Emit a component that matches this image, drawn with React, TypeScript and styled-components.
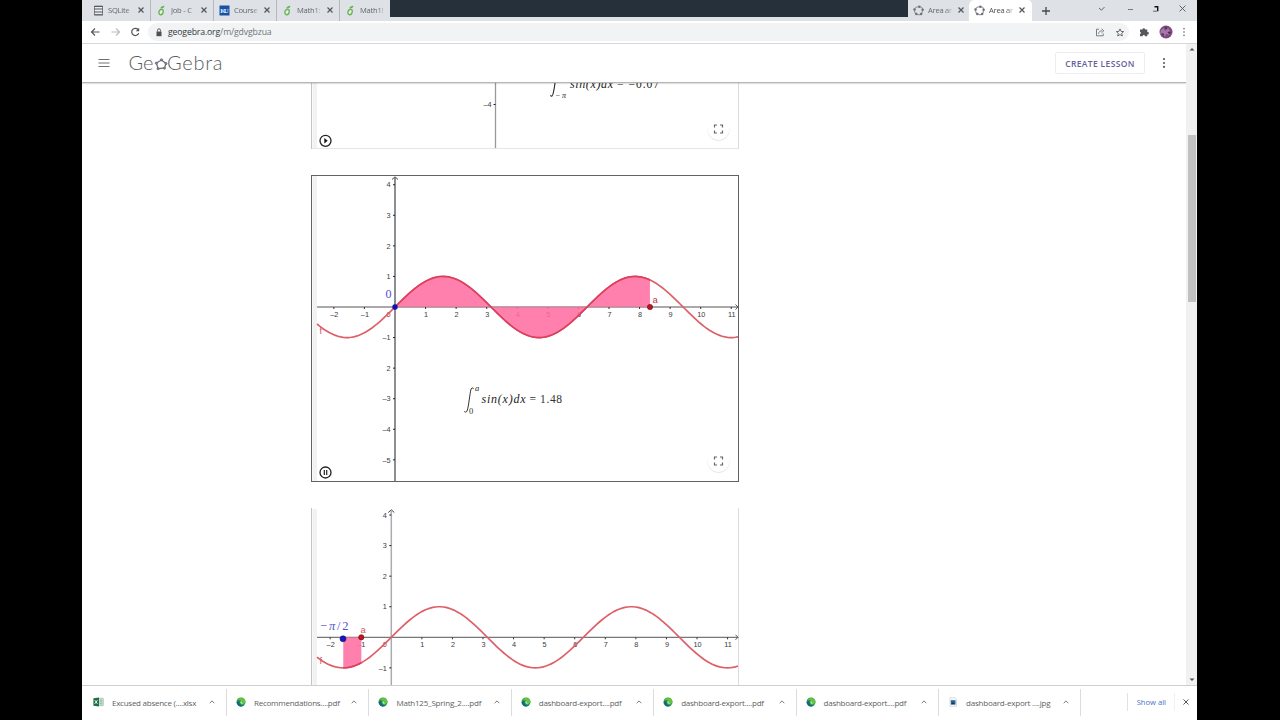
import React from "react";
import styled, { createGlobalStyle, css } from "styled-components";

const Global = createGlobalStyle`
  * { box-sizing: border-box; }
  body { margin: 0; background: #000; font-family: "Open Sans", "Noto Sans", sans-serif; }
`;

const Screen = styled.div`
  width: 1280px; height: 720px; background: #000; overflow: hidden;
  display: flex; justify-content: flex-start; padding-left: 82px;
`;
const BrowserWindow = styled.div`
  width: 1115px; height: 720px; background: #fff;
  display: flex; flex-direction: column;
`;

/* Tab strip */
const TabStrip = styled.div`
  height: 21px; flex: none; background: #dee1e6; display: flex; align-items: stretch; padding-left: 6px;
`;
const TabBox = styled.div<{ $active?: boolean; $w: number; $sep?: boolean }>`
  width: ${p => p.$w}px; flex: none; display: flex; align-items: center; padding: 0 0 1px 5px;
  font-size: 7.6px; color: ${p => (p.$active ? "#4a4d51" : "#63676c")};
  ${p => p.$active && css`background: #fff; border-radius: 5px 5px 0 0;`}
  border-right: 1px solid ${p => (p.$sep ? "#b4b7bc" : "transparent")};
  background-clip: padding-box;
`;
const TabTitle = styled.span`
  width: 25px; margin-left: 4px; white-space: nowrap; letter-spacing: -.25px;
  mask-image: linear-gradient(90deg, #000 70%, rgba(0, 0, 0, .15) 100%);
`;
const CloseSlot = styled.span`
  margin-left: 5px; display: flex;
`;
const DarkStrip = styled.div`
  width: 518px; height: 17px; flex: none; background: #25303b;
`;
const WindowControls = styled.div`
  flex: 1; display: flex; align-items: center; justify-content: space-between; padding: 0 11px 4px 9px;
`;

/* Address bar */
const Toolbar = styled.div`
  height: 23px; flex: none; display: flex; align-items: center; padding: 0 11px 0 8px;
  border-bottom: 1px solid #d5d7da;
`;
const NavButtons = styled.div`
  width: 58px; flex: none; display: flex; gap: 9px;
`;
const Omnibox = styled.div`
  width: 981px; height: 18px; border-radius: 9px; background: #f1f3f4;
  display: flex; align-items: center; padding: 0 4px 0 7px;
`;
const Url = styled.span`
  font-size: 8.7px; color: #707478; margin-left: 5px; flex: 1; white-space: nowrap; letter-spacing: -.15px;
  b { font-weight: 400; color: #33373b; }
`;
const OmniIcons = styled.div`
  display: flex; gap: 10px; align-items: center;
`;
const ToolbarEnd = styled.div`
  flex: 1; display: flex; align-items: center; justify-content: space-between; padding-left: 10px;
`;

/* Site */
const PageArea = styled.div`
  flex: 1; min-height: 0; display: flex;
`;
const Site = styled.div`
  width: 1104px; display: flex; flex-direction: column; overflow: hidden;
`;
const SiteHeader = styled.header`
  height: 39px; flex: none; display: flex; align-items: center; padding: 0 20px 0 16px;
  border-bottom: 1px solid #b6b6b6; box-shadow: 0 1px 1px rgba(0, 0, 0, .12); position: relative;
`;
const LogoSlot = styled.div`
  margin-left: 19px; flex: 1; display: flex;
`;
const CreateButton = styled.button`
  width: 90px; height: 22px; border: 1px solid #ececf1; border-radius: 2px; background: #fff; padding: 1px 0 0;
  font: 600 8.5px "Open Sans", sans-serif; letter-spacing: .36px; color: #655f9e; margin-right: 17px;
  white-space: nowrap;
`;
const AppletColumn = styled.main`
  flex: 1; min-height: 0; overflow: hidden; padding-left: 229px; display: flex; flex-direction: column; gap: 26px;
`;
const Applet = styled.section<{ $h: number; $selected?: boolean; $bottom?: boolean }>`
  width: 428px; height: ${p => p.$h}px; flex: none; overflow: hidden;
  box-shadow: ${p => (p.$selected ? "inset 0 0 0 1px #626262" : "inset 1px 0 0 #c4c4c4, inset -1px 0 0 #dcdcdc")}
    ${p => (p.$bottom ? ", inset 0 -1px 0 #e6e6e6" : "")};
  svg { display: block; }
`;

const ScrollTrack = styled.div`
  width: 11px; background: #f1f1f1; display: flex; flex-direction: column; align-items: center; padding: 3px 0 3px;
`;
const ScrollThumb = styled.div`
  width: 8px; height: 167px; margin: 84px 0 auto; background: #c1c1c1;
`;

/* Downloads */
const Downloads = styled.footer`
  height: 35px; flex: none; border-top: 1px solid #cfcfcf; display: flex; align-items: center; padding-bottom: 2px;
`;
const DownloadItem = styled.div<{ $first?: boolean }>`
  width: ${p => (p.$first ? 145 : 142.4)}px; height: 27px; flex: none; display: flex; align-items: center;
  padding: 0 11px 0 ${p => (p.$first ? 11 : 9)}px; border-right: 1px solid #dcdcdc;
`;
const FileName = styled.span<{ $ls?: number }>`
  font-size: 8px; color: #5c5f63; margin-left: 8px; flex: 1; white-space: nowrap; letter-spacing: ${p => p.$ls ?? 0}px;
`;
const ShowAll = styled.div`
  margin-left: 46px; height: 18px; width: 48px; display: flex; align-items: center; justify-content: center;
  border-left: 1px solid #e2e2e2; border-right: 1px solid #f0f0f0; font-size: 7.6px; color: #4a6fcb; white-space: nowrap;
`;
const DismissSlot = styled.div`
  margin-left: 8px; display: flex;
`;

/* Icons */
const Cross = ({ s = 6, c = "#54575b", w = 1.2 }: { s?: number; c?: string; w?: number }) => (
  <svg width={s} height={s} viewBox="0 0 6 6"><path d="M.5.5l5 5M5.5.5l-5 5" stroke={c} strokeWidth={w} /></svg>
);
const ListIcon = () => (
  <svg width="11" height="11" viewBox="0 0 11 11"><path d="M1.5 1h8v9h-8z" fill="#eceef0" stroke="#85888c" /><path d="M1 1.5h9M1 4h9M1 7h9M1 9.7h9" stroke="#55585c" strokeWidth="1.1" /></svg>
);
const GreenIcon = () => (
  <svg width="11" height="11" viewBox="0 0 11 11"><path d="M7.200 5.200C6.300 3.900 3.800 4.200 3.100 6.300 2.400 8.600 3.600 10 5 9.700 6.700 9.300 7.400 7.500 7.200 5.200z" fill="#e6f2dd" stroke="#6cb25c" strokeWidth="1.400" /><path d="M4.300 3.400C4.700 1.700 6.200.9 8.500.8 8.200 2.600 6.800 3.800 4.300 3.400z" fill="#62b250" /></svg>
);
const KuIcon = () => (
  <svg width="11" height="11" viewBox="0 0 11 11"><path d="M.5.500h10v10H.5z" fill="#1653a8" /><text x="5.500" y="8.200" textAnchor="middle" fontFamily="Liberation Serif, serif" fontWeight="700" fontSize="6.800" fill="#e4edf8" textLength="8.500">KU</text></svg>
);
const GeoIcon = () => (
  <svg width="11" height="11" viewBox="0 0 11 11"><path d="M5.700 1.700C8 1.500 9.800 2.700 9.600 4.700c0 2-.4 3.500-1.600 4.200-1.500.9-3.500.8-4.600.1C2 8 1.300 6.500 1.500 4.900 1.700 3 3.500 1.900 5.700 1.700z" fill="none" stroke="#999ca3" strokeWidth="1.200" />{[[6.3, 1.7], [9.6, 4.7], [8.1, 8.9], [3.3, 9], [1.5, 4.6]].map(([x, y]) => <circle key={x} cx={x} cy={y} r="1.250" fill="#70737a" />)}</svg>
);
const Dots = ({ h, r, c }: { h: number; r: number; c: string }) => (
  <svg width="4" height={h} viewBox={`0 0 4 ${h}`}>{[r, h / 2, h - r].map(y => <circle key={y} cx="2" cy={y} r={r} fill={c} />)}</svg>
);
const Caret = () => (
  <svg width="6" height="4" viewBox="0 0 6 4"><path d="M.7 3.200L3 .9l2.300 2.300" fill="none" stroke="#686b6f" strokeWidth=".9" /></svg>
);
const EdgeIcon = () => (
  <svg width="10" height="10" viewBox="0 0 10 10"><circle cx="5" cy="5" r="4.500" fill="#2f9d45" /><path d="M.6 5.300A4.400 4.400 0 0 0 7.500 8.700C4.500 8.700 3 7 3.600 4.600 2.500 3.900 1.200 4 .6 5.300z" fill="#17628e" /><path d="M1.200 2.900C3 .2 8.200-.2 9.500 4.500 9.700 6.500 7 7 6 5.800 6.300 4 4 2.500 1.200 2.900z" fill="#63c540" /><path d="M4.300 4.500c.8-.7 2-.2 1.800.8-.2.900.8 1.400 1.900 1.300-1.400 1.300-4 .5-3.700-2.100z" fill="#a9dfa0" /></svg>
);
const ExcelIcon = () => (
  <svg width="11" height="10" viewBox="0 0 11 10"><path d="M5 1.300h5.300v7.300H5z" fill="#f2f7f4" stroke="#96b7a4" strokeWidth=".7" /><path d="M6 3.200h4M6 5h4M6 6.800h4M8 1.500v7" stroke="#85ab95" strokeWidth=".7" /><path d="M.4 1.300L6 .4v9.200L.4 8.700z" fill="#1d7044" /><path d="M1.800 3.200l2.600 3.600M4.400 3.200L1.800 6.800" stroke="#fff" strokeWidth=".9" /></svg>
);
const ImageIcon = () => (
  <svg width="10" height="10" viewBox="0 0 10 10"><path d="M2 .8h5l1.500 1.500v7H2z" fill="#fafbfc" stroke="#c0c5ca" strokeWidth=".6" /><path d="M2.800 3.200h4.700v4.300H2.800z" fill="#2a6296" /><path d="M3 7.200l1.800-2 2.500 2z" fill="#16354e" /></svg>
);

const Logo = () => (
  <svg width="96" height="22" viewBox="0 0 96 22" fontFamily="Lato, sans-serif" fontWeight="300" fontSize="20" fill="#5c5c60">
    <text x="-.5" y="17.500" textLength="25">Ge</text>
    <path d="M27.500 11l5-3 4.500 3.500-1.500 4.500-6.500.7z" fill="none" stroke="#737377" strokeWidth="1.300" />
    {[[27.3, 11.2], [32.5, 7.8], [37, 11.6], [35.5, 16.2], [29, 16.7]].map(([x, y]) => <circle key={x} cx={x} cy={y} r="1.100" fill="#8d8bbb" stroke="#55555c" strokeWidth=".6" />)}
    <text x="38" y="17.500" textLength="55.500">Gebra</text>
  </svg>
);

/* Graphing applets */
const UNIT = 30.57;
const AXIS_FONT = { fontFamily: "Liberation Sans, sans-serif", fontSize: 7.3, fill: "#3c3c3c" };
const MATH_FONT = { fontFamily: "Liberation Serif, serif", fontStyle: "italic", fill: "#222" };

const minus = (n: number) => (n < 0 ? `–${-n}` : `${n}`);

const sine = (ox: number, oy: number, from: number, to: number) => {
  const pts: string[] = [];
  for (let i = 0; i <= 160; i++) {
    const x = from + ((to - from) * i) / 160;
    pts.push(`${(ox + x * UNIT).toFixed(2)} ${(oy - Math.sin(x) * UNIT).toFixed(2)}`);
  }
  return pts.join("L");
};

const Expand = ({ x, y }: { x: number; y: number }) => (
  <g transform={`translate(${x} ${y})`}>
    <circle cy=".8" r="11" fill="#dedede" /><circle r="11" fill="#fff" />
    <path d="M-4-1.500V-4h2.500M1.500-4H4v2.500M4 1.500V4H1.500M-1.500 4H-4V1.500" fill="none" stroke="#666" strokeWidth="1.200" />
  </g>
);
const PlayToggle = ({ x, y, playing }: { x: number; y: number; playing?: boolean }) => (
  <g transform={`translate(${x} ${y})`}>
    <circle r="5.500" fill="#fff" stroke="#222" strokeWidth="1.300" />
    {playing ? <path d="M-1.200-2.500v5M1.200-2.500v5" stroke="#222" strokeWidth="1.200" /> : <path d="M-1.200-2.800L2.200 0l-3.400 2.800z" fill="#111" />}
  </g>
);

interface GraphProps {
  h: number; ox: number; oy: number; from: number; to: number; yAxis: string; yWidth: number;
  yTicks: number[]; children?: React.ReactNode; unsigned?: number;
}
const Graph = ({ h, ox, oy, from, to, yAxis, yWidth, yTicks, children, unsigned }: GraphProps) => {
  const start = (6 - ox) / UNIT;
  const end = (427 - ox) / UNIT;
  const xs = [-2, -1, 1, 2, 3, 4, 5, 6, 7, 8, 9, 10, 11];
  return (
    <svg width="428" height={h} viewBox={`0 0 428 ${h}`}>
      <path d={`M1.500 1h4.500v${h - 2}h-4.500z`} fill="#f2f2f2" />
      <path d={`M${ox} 3V${h - 1}`} stroke={yAxis} strokeWidth={yWidth} />
      <path d={`M${ox - 3} 4.500L${ox} 1.800l3 2.700`} fill="none" stroke="#444" />
      <path d={`M6 ${oy}H427M424.500 ${oy - 2.5}l2.500 2.500-2.500 2.500`} fill="none" stroke="#555" />
      {xs.map(n => (
        <g key={n}>
          <path d={`M${ox + n * UNIT} ${oy}v2`} stroke="#333" />
          <text x={ox + n * UNIT + 0.5} y={oy + 9.8} textAnchor="middle" {...AXIS_FONT}>{minus(n)}</text>
        </g>
      ))}
      <text x={ox - 4.5} y={oy + 9.8} textAnchor="end" {...AXIS_FONT} fill="#8a3038">0</text>
      {yTicks.map(n => (
        <g key={n}>
          <path d={`M${ox - 2} ${oy - n * UNIT}h2`} stroke="#222" />
          <text x={ox - 4.5} y={oy - n * UNIT + 2.7} textAnchor="end" {...AXIS_FONT}>{n === unsigned ? -n : minus(n)}</text>
        </g>
      ))}
      <path d={`M${ox + from * UNIT} ${oy}L${sine(ox, oy, from, to)}L${ox + to * UNIT} ${oy}z`} fill="#ff6da0" fillOpacity=".87" />
      <path d={`M${sine(ox, oy, start, end)}`} fill="none" stroke="#dc6068" strokeWidth="1.700" />
      <path d={`M${sine(ox, oy, from, to)}`} fill="none" stroke="#de3d60" strokeWidth="1.500" />
      <text x="8.500" y={oy + 26.5} fontFamily="Liberation Sans, sans-serif" fontSize="9" fill="#d0545c">f</text>
      {children}
    </svg>
  );
};

const tabs = [
  { icon: <ListIcon />, title: "SQLite" },
  { icon: <GreenIcon />, title: "Job - C" },
  { icon: <KuIcon />, title: "Course" },
  { icon: <GreenIcon />, title: "Math1:" },
];
const files = [
  { icon: <ExcelIcon />, name: "Excused absence (....xlsx", ls: -0.26 },
  { icon: <EdgeIcon />, name: "Recommendations....pdf", ls: -0.24 },
  { icon: <EdgeIcon />, name: "Math125_Spring_2....pdf", ls: -0.2 },
  { icon: <EdgeIcon />, name: "dashboard-export....pdf", ls: -0.25 },
  { icon: <EdgeIcon />, name: "dashboard-export....pdf", ls: -0.25 },
  { icon: <EdgeIcon />, name: "dashboard-export....pdf", ls: -0.25 },
  { icon: <ImageIcon />, name: "dashboard-export ....jpg", ls: -0.2 },
];

export default function App() {
  return (
    <Screen>
      <Global />
      <BrowserWindow>
        <TabStrip>
          {tabs.map(t => (
            <TabBox key={t.title} $w={63} $sep>{t.icon}<TabTitle>{t.title}</TabTitle><CloseSlot><Cross /></CloseSlot></TabBox>
          ))}
          <TabBox $w={50}><GreenIcon /><TabTitle>Math1!</TabTitle></TabBox>
          <DarkStrip />
          <TabBox $w={61}><GeoIcon /><TabTitle>Area ar</TabTitle><CloseSlot><Cross /></CloseSlot></TabBox>
          <TabBox $w={64} $active><GeoIcon /><TabTitle>Area ar</TabTitle><CloseSlot><Cross /></CloseSlot></TabBox>
          <WindowControls>
            <svg width="8" height="8" viewBox="0 0 8 8" style={{ marginTop: 4 }}><path d="M0 4h8M4 0v8" stroke="#45484c" strokeWidth="1.300" /></svg>
            <svg width="38" height="6" viewBox="0 0 38 6"><path d="M29 2l2.500 2.200L34.500 1" fill="none" stroke="#66696d" /></svg>
            <svg width="6" height="6" viewBox="0 0 6 6"><path d="M-1 3.500h6" stroke="#75787c" /></svg>
            <svg width="6" height="6" viewBox="0 0 6 6"><path d="M0 5.200h4" stroke="#66696d" /><path d="M1.500.8h3.200v4.500" fill="none" stroke="#111" strokeWidth="1.400" /></svg>
            <Cross s={7} w={0.8} />
          </WindowControls>
        </TabStrip>

        <Toolbar>
          <NavButtons>
            <svg width="11" height="10" viewBox="0 0 11 10"><path d="M9.500 5H1.800M5 1.500L1.500 5 5 8.500" fill="none" stroke="#505357" strokeWidth="1.100" /></svg>
            <svg width="11" height="10" viewBox="0 0 11 10"><path d="M1.500 5h7.700M6 1.500L9.500 5 6 8.500" fill="none" stroke="#b9bcbf" strokeWidth="1.100" /></svg>
            <svg width="11" height="10" viewBox="0 0 11 10"><path d="M8.700 6.200A3.600 3.600 0 1 1 8 2.500" fill="none" stroke="#505357" strokeWidth="1.200" /><path d="M9.200.8v3.400H5.800z" fill="#505357" /></svg>
          </NavButtons>
          <Omnibox>
            <svg width="8" height="9" viewBox="0 0 8 9"><path d="M1.500 3.500h5v4.700h-5z" fill="#4c4f53" /><path d="M2.500 3.500V2.300a1.500 1.500 0 0 1 3 0v1.200" fill="none" stroke="#4c4f53" strokeWidth=".9" /></svg>
            <Url><b>geogebra.org</b>/m/gdvgbzua</Url>
            <OmniIcons>
              <svg width="10" height="9" viewBox="0 0 10 9"><path d="M4 1.200H1.500v6.600h6.700V5.500M3.500 5.800c.2-2 1.500-3 3.500-3M6.500.8l2.300 2-2.300 2" fill="none" stroke="#6c6f73" strokeWidth=".9" /></svg>
              <svg width="10" height="9" viewBox="0 0 10 9"><path d="M5 .9l1.100 2.500 2.600.2-2 1.800.6 2.600L5 6.600 2.700 8l.6-2.600-2-1.800 2.600-.2z" fill="none" stroke="#5c5f63" strokeWidth=".9" /></svg>
            </OmniIcons>
          </Omnibox>
          <ToolbarEnd>
            <svg width="10" height="10" viewBox="0 0 10 10"><path d="M1 2.500h2.500a1.300 1.300 0 1 1 2.600 0h2.200V5a1.200 1.200 0 1 1 0 2.300v2H6a1.200 1.200 0 0 0-2.400 0H1V7a1.200 1.200 0 0 0 0-2.300z" fill="#54575b" /></svg>
            <svg width="14" height="14" viewBox="0 0 14 14"><circle cx="7" cy="7" r="6.500" fill="#7d4a80" /><path d="M2 5l3-2 1 3 3-3 2 3-3 1 3 3-4-1-1 3-2-4-3 1z" fill="#a878aa" /><path d="M6 1l2 2-1 2zM3 8l2 1-1 2zM9 7l3 0-2 2z" fill="#4a2350" /></svg>
            <Dots h={8} r={0.8} c="#5c5f63" />
          </ToolbarEnd>
        </Toolbar>

        <PageArea>
          <Site>
            <SiteHeader>
              <svg width="12" height="10" viewBox="0 0 12 10"><path d="M.5 1.500h11M.5 5h11M.5 8.500h11" stroke="#707070" strokeWidth="1.200" /></svg>
              <LogoSlot><Logo /></LogoSlot>
              <CreateButton>CREATE LESSON</CreateButton>
              <Dots h={10} r={1.1} c="#606060" />
            </SiteHeader>
            <AppletColumn>
              <Applet $h={66} $bottom>
                <svg width="428" height="66" viewBox="0 0 428 66">
                  <path d="M1.500 0h4.500v65h-4.500z" fill="#f2f2f2" />
                  <path d="M184.500 0v65" stroke="#999" strokeWidth="1.300" /><path d="M182.500 21.500h2" stroke="#222" />
                  <text x="180.500" y="24" textAnchor="end" {...AXIS_FONT}>–4</text>
                  <path d="M245.500-10c-1.500 8-2.500 22-4.500 23-.6.300-1.400 0-1.500-.8" fill="none" stroke="#222" strokeWidth="1.100" />
                  <text x="244" y="15" {...MATH_FONT} fontSize="8" textLength="11">−π</text>
                  <text x="259" y="5" {...MATH_FONT} fontSize="12" textLength="43">sin(x)dx</text>
                  <text x="306" y="5" fontFamily="Liberation Serif, serif" fontSize="11.500" fill="#222" textLength="42">= −0.07</text>
                  <PlayToggle x={14.5} y={57.8} />
                  <Expand x={407.5} y={46} />
                </svg>
              </Applet>
              <Applet $h={307} $selected>
                <Graph h={307} ox={84} oy={132} from={0} to={8.34} yAxis="#707276" yWidth={1.6} yTicks={[4, 3, 2, 1, -1, -2, -3, -4, -5]} unsigned={-2}>
                  <circle cx="84" cy="132" r="2.700" fill="#1010b0" />
                  <circle cx="339" cy="132" r="2.600" fill="#c4121e" stroke="#6a1018" strokeWidth=".7" />
                  <text x="341.500" y="127.500" fontFamily="Liberation Sans, sans-serif" fontSize="9.500" fill="#c8343e">a</text>
                  <text x="74.500" y="122.500" fontFamily="Liberation Serif, serif" fontSize="12" fill="#4c4cd0">0</text>
                  <path d="M162.500 214c-.2-1.300-1.800-1.500-2.400 0-1.500 5-2.200 17-4.100 22-.6 1.500-2.200 1.500-2.600.3" fill="none" stroke="#333" />
                  <text x="164" y="215.500" {...MATH_FONT} fontSize="8.500">a</text>
                  <text x="158" y="239" fontFamily="Liberation Serif, serif" fontSize="8.500" fill="#333">0</text>
                  <text x="170.500" y="228" {...MATH_FONT} fontSize="12" textLength="44">sin(x)dx</text>
                  <text x="218.500" y="228" fontFamily="Liberation Serif, serif" fontSize="11.500" fill="#333" textLength="32.500">= 1.48</text>
                  <PlayToggle x={14.5} y={297.5} playing />
                  <Expand x={407.5} y={286} />
                </Graph>
              </Applet>
              <Applet $h={306}>
                <Graph h={306} ox={80.3} oy={129.3} from={-1.571} to={-0.98} yAxis="#aaacae" yWidth={1.5} yTicks={[4, 3, 2, 1, -1]}>
                  <circle cx="32" cy="130.800" r="3" fill="#1414c8" stroke="#101060" strokeWidth=".6" />
                  <circle cx="50.300" cy="129.300" r="2.600" fill="#c4121e" stroke="#6a1018" strokeWidth=".7" />
                  <text x="49.500" y="125.200" fontFamily="Liberation Sans, sans-serif" fontSize="9.500" fill="#d8545c">a</text>
                  <text x="9" y="122.200" fontFamily="Liberation Serif, serif" fontSize="12.500" fill="#5454c8" textLength="28.500">−<tspan fontStyle="italic">π</tspan>/2</text>
                </Graph>
              </Applet>
            </AppletColumn>
          </Site>
          <ScrollTrack>
            <svg width="6" height="4" viewBox="0 0 6 4"><path d="M.5 3.500L3 1l2.500 2.500z" fill="#505050" /></svg>
            <ScrollThumb />
            <svg width="6" height="4" viewBox="0 0 6 4"><path d="M.5.5L3 3 5.500.5z" fill="#505050" /></svg>
          </ScrollTrack>
        </PageArea>

        <Downloads>
          {files.map((f, i) => (
            <DownloadItem key={i} $first={i === 0}>{f.icon}<FileName $ls={f.ls}>{f.name}</FileName><Caret /></DownloadItem>
          ))}
          <ShowAll>Show all</ShowAll>
          <DismissSlot><Cross s={6} w={1} /></DismissSlot>
        </Downloads>
      </BrowserWindow>
    </Screen>
  );
}
